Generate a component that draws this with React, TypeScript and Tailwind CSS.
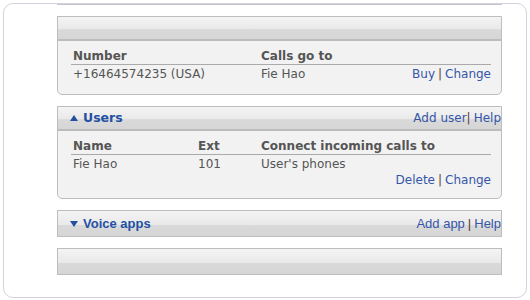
import React from 'react';

const hdr =
  'bg-[linear-gradient(to_bottom,#f4f4f4,#e9e9e9_56%,#d9d9d9_57%,#d6d6d6)]';

const Up = () => (
  <svg width="8" height="6" viewBox="0 0 8 6" className="mr-[5px]">
    <polygon points="4,0 8,6 0,6" fill="#2450a4" />
  </svg>
);

const Down = () => (
  <svg width="8" height="6" viewBox="0 0 8 6" className="mr-[5px]">
    <polygon points="0,0 8,0 4,6" fill="#2450a4" />
  </svg>
);

const Sep = ({ tight }: { tight?: boolean }) => (
  <span className={`text-[#5b3a2a] ${tight ? 'mr-[3px]' : 'mx-[3px]'}`}>|</span>
);

const App = () => {
  return (
    <div className="p-[3px] font-['DejaVu_Sans',Verdana,sans-serif] text-[12px] leading-[14px] text-[#555]">
      <div className="h-[295px] rounded-[10px] border border-[#d2d2dc] bg-white">
        <div className="ml-[53px] w-[445px] h-px bg-[#c6c6c6]" />

        {/* numbers */}
        <div className="ml-[53px] mt-[11px] w-[445px] rounded-b-[5px] border border-[#bdbdbd] bg-[#f2f2f2]">
          <div className={`h-[24px] border-b-2 border-[#bcbcbc] ${hdr}`} />
          <div className="h-[53px] pl-[13px] pr-[10px] pt-[8px]">
            <div className="flex h-[16px] border-b border-[#aaa] font-bold">
              <span className="w-[190px] pl-[2px]">Number</span>
              <span>Calls go to</span>
            </div>
            <div className="flex h-[17px] pt-[2px]">
              <span className="w-[190px] pl-[2px]">+16464574235 (USA)</span>
              <span>Fie Hao</span>
              <span className="ml-auto text-[#3556a8]">
                Buy<Sep />Change
              </span>
            </div>
          </div>
        </div>

        {/* users */}
        <div className="ml-[53px] mt-[11px] w-[445px] rounded-b-[5px] border border-[#bdbdbd] bg-[#f2f2f2]">
          <div className={`flex h-[24px] items-center border-b-2 border-[#bcbcbc] pl-[12px] ${hdr}`}>
            <Up />
            <span className="text-[12.5px] font-bold text-[#2450a4]">Users</span>
            <span className="ml-auto text-[#3556a8]">
              Add user<Sep tight />Help
            </span>
          </div>
          <div className="h-[67px] pl-[13px] pr-[10px] pt-[8px]">
            <div className="flex h-[16px] border-b border-[#aaa] font-bold">
              <span className="w-[127px] pl-[2px]">Name</span>
              <span className="w-[63px]">Ext</span>
              <span>Connect incoming calls to</span>
            </div>
            <div className="flex h-[17px] pt-[2px]">
              <span className="w-[127px] pl-[2px]">Fie Hao</span>
              <span className="w-[63px]">101</span>
              <span>User's phones</span>
            </div>
            <div className="flex pt-[1px]">
              <span className="ml-auto text-[#3556a8]">
                Delete<Sep />Change
              </span>
            </div>
          </div>
        </div>

        {/* voice apps */}
        <div className="ml-[53px] mt-[11px] w-[445px] border border-[#bdbdbd]">
          <div className={`flex h-[25px] items-center pl-[12px] ${hdr}`}>
            <Down />
            <span className="font-['Liberation_Sans',Arial,sans-serif] text-[13px] font-bold text-[#2450a4]">
              Voice apps
            </span>
            <span className="ml-auto font-['Liberation_Sans',Arial,sans-serif] text-[13px] text-[#3556a8]">
              Add app<Sep />Help
            </span>
          </div>
        </div>

        {/* empty */}
        <div className="ml-[53px] mt-[11px] w-[445px] border border-[#bdbdbd]">
          <div className={`h-[25px] ${hdr}`} />
        </div>
      </div>
    </div>
  );
};

export default App;
